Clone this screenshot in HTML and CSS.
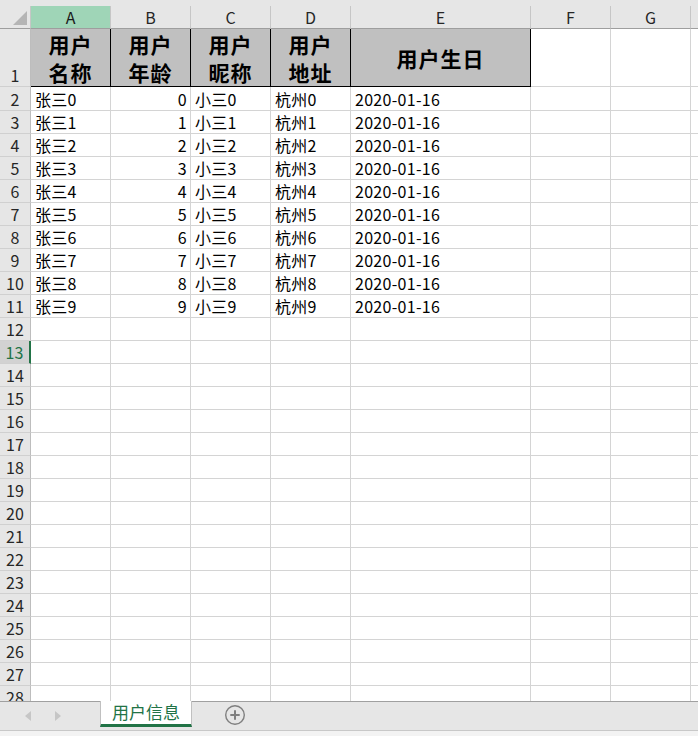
FILE: index.html
```html
<!DOCTYPE html>
<html>
<head>
<meta charset="utf-8">
<link rel="stylesheet" href="styles.css">
</head>
<body>
<div class="app">
  <div class="sheet">
    <div class="topstrip"></div>
    <div class="row colhead">
      <div class="corner"><span class="tri"></span></div>
      <div class="ch sel">A</div><div class="ch">B</div><div class="ch">C</div><div class="ch">D</div><div class="ch">E</div><div class="ch">F</div><div class="ch">G</div><div class="ch"></div>
    </div>
    <div class="row r1">
      <div class="rh">1</div>
      <div class="hd">用户<br>名称</div><div class="hd">用户<br>年龄</div><div class="hd">用户<br>昵称</div><div class="hd">用户<br>地址</div><div class="hd">用户生日</div><div class="c"></div><div class="c"></div><div class="c"></div>
    </div>
    <div class="row r2"><div class="rh">2</div><div class="c">张三0</div><div class="c num">0</div><div class="c">小三0</div><div class="c">杭州0</div><div class="c">2020-01-16</div><div class="c"></div><div class="c"></div><div class="c"></div></div>
    <div class="row"><div class="rh">3</div><div class="c">张三1</div><div class="c num">1</div><div class="c">小三1</div><div class="c">杭州1</div><div class="c">2020-01-16</div><div class="c"></div><div class="c"></div><div class="c"></div></div>
    <div class="row"><div class="rh">4</div><div class="c">张三2</div><div class="c num">2</div><div class="c">小三2</div><div class="c">杭州2</div><div class="c">2020-01-16</div><div class="c"></div><div class="c"></div><div class="c"></div></div>
    <div class="row"><div class="rh">5</div><div class="c">张三3</div><div class="c num">3</div><div class="c">小三3</div><div class="c">杭州3</div><div class="c">2020-01-16</div><div class="c"></div><div class="c"></div><div class="c"></div></div>
    <div class="row"><div class="rh">6</div><div class="c">张三4</div><div class="c num">4</div><div class="c">小三4</div><div class="c">杭州4</div><div class="c">2020-01-16</div><div class="c"></div><div class="c"></div><div class="c"></div></div>
    <div class="row"><div class="rh">7</div><div class="c">张三5</div><div class="c num">5</div><div class="c">小三5</div><div class="c">杭州5</div><div class="c">2020-01-16</div><div class="c"></div><div class="c"></div><div class="c"></div></div>
    <div class="row"><div class="rh">8</div><div class="c">张三6</div><div class="c num">6</div><div class="c">小三6</div><div class="c">杭州6</div><div class="c">2020-01-16</div><div class="c"></div><div class="c"></div><div class="c"></div></div>
    <div class="row"><div class="rh">9</div><div class="c">张三7</div><div class="c num">7</div><div class="c">小三7</div><div class="c">杭州7</div><div class="c">2020-01-16</div><div class="c"></div><div class="c"></div><div class="c"></div></div>
    <div class="row"><div class="rh">10</div><div class="c">张三8</div><div class="c num">8</div><div class="c">小三8</div><div class="c">杭州8</div><div class="c">2020-01-16</div><div class="c"></div><div class="c"></div><div class="c"></div></div>
    <div class="row"><div class="rh">11</div><div class="c">张三9</div><div class="c num">9</div><div class="c">小三9</div><div class="c">杭州9</div><div class="c">2020-01-16</div><div class="c"></div><div class="c"></div><div class="c"></div></div>
    <div class="row"><div class="rh">12</div><div class="c"></div><div class="c"></div><div class="c"></div><div class="c"></div><div class="c"></div><div class="c"></div><div class="c"></div><div class="c"></div></div>
    <div class="row"><div class="rh active">13</div><div class="c"></div><div class="c"></div><div class="c"></div><div class="c"></div><div class="c"></div><div class="c"></div><div class="c"></div><div class="c"></div></div>
    <div class="row"><div class="rh">14</div><div class="c"></div><div class="c"></div><div class="c"></div><div class="c"></div><div class="c"></div><div class="c"></div><div class="c"></div><div class="c"></div></div>
    <div class="row"><div class="rh">15</div><div class="c"></div><div class="c"></div><div class="c"></div><div class="c"></div><div class="c"></div><div class="c"></div><div class="c"></div><div class="c"></div></div>
    <div class="row"><div class="rh">16</div><div class="c"></div><div class="c"></div><div class="c"></div><div class="c"></div><div class="c"></div><div class="c"></div><div class="c"></div><div class="c"></div></div>
    <div class="row"><div class="rh">17</div><div class="c"></div><div class="c"></div><div class="c"></div><div class="c"></div><div class="c"></div><div class="c"></div><div class="c"></div><div class="c"></div></div>
    <div class="row"><div class="rh">18</div><div class="c"></div><div class="c"></div><div class="c"></div><div class="c"></div><div class="c"></div><div class="c"></div><div class="c"></div><div class="c"></div></div>
    <div class="row"><div class="rh">19</div><div class="c"></div><div class="c"></div><div class="c"></div><div class="c"></div><div class="c"></div><div class="c"></div><div class="c"></div><div class="c"></div></div>
    <div class="row"><div class="rh">20</div><div class="c"></div><div class="c"></div><div class="c"></div><div class="c"></div><div class="c"></div><div class="c"></div><div class="c"></div><div class="c"></div></div>
    <div class="row"><div class="rh">21</div><div class="c"></div><div class="c"></div><div class="c"></div><div class="c"></div><div class="c"></div><div class="c"></div><div class="c"></div><div class="c"></div></div>
    <div class="row"><div class="rh">22</div><div class="c"></div><div class="c"></div><div class="c"></div><div class="c"></div><div class="c"></div><div class="c"></div><div class="c"></div><div class="c"></div></div>
    <div class="row"><div class="rh">23</div><div class="c"></div><div class="c"></div><div class="c"></div><div class="c"></div><div class="c"></div><div class="c"></div><div class="c"></div><div class="c"></div></div>
    <div class="row"><div class="rh">24</div><div class="c"></div><div class="c"></div><div class="c"></div><div class="c"></div><div class="c"></div><div class="c"></div><div class="c"></div><div class="c"></div></div>
    <div class="row"><div class="rh">25</div><div class="c"></div><div class="c"></div><div class="c"></div><div class="c"></div><div class="c"></div><div class="c"></div><div class="c"></div><div class="c"></div></div>
    <div class="row"><div class="rh">26</div><div class="c"></div><div class="c"></div><div class="c"></div><div class="c"></div><div class="c"></div><div class="c"></div><div class="c"></div><div class="c"></div></div>
    <div class="row"><div class="rh">27</div><div class="c"></div><div class="c"></div><div class="c"></div><div class="c"></div><div class="c"></div><div class="c"></div><div class="c"></div><div class="c"></div></div>
    <div class="row"><div class="rh">28</div><div class="c"></div><div class="c"></div><div class="c"></div><div class="c"></div><div class="c"></div><div class="c"></div><div class="c"></div><div class="c"></div></div>
  </div>
  <div class="tabbar">
    <div class="nav">
      <span class="arrow left"></span>
      <span class="arrow right"></span>
    </div>
    <div class="tab">用户信息</div>
    <div class="add">
      <svg width="22" height="22" viewBox="0 0 22 22">
        <circle cx="11" cy="11" r="9.3" fill="none" stroke="#7f7f7f" stroke-width="1.4"/>
        <path d="M11 6.3v9.4M6.3 11h9.4" stroke="#7f7f7f" stroke-width="2"/>
      </svg>
    </div>
  </div>
  <div class="statusstrip"></div>
</div>
</body>
</html>
```

FILE: styles.css
```css
* { box-sizing: border-box; }
html, body { margin: 0; padding: 0; }
body {
  width: 698px;
  height: 736px;
  overflow: hidden;
  background: #ffffff;
  font-family: "Noto Sans CJK SC", "Noto Sans", sans-serif;
  color: #000;
}
.app {
  display: flex;
  flex-direction: column;
  height: 736px;
}
.sheet {
  flex: 1;
  overflow: hidden;
  background: #fff;
}
.topstrip {
  height: 6px;
  background: #e6e6e6;
}
.row {
  display: grid;
  grid-template-columns: 31px 80px 80px 80px 80px 180px 80px 80px 80px;
  height: 23px;
}
.row.colhead { height: 23px; }
.row.r1 { height: 58px; }
.row.r2 { height: 24px; }

.corner {
  position: relative;
  background: #e6e6e6;
  border-right: 1px solid #c6c6c6;
  border-bottom: 1px solid #9e9e9e;
}
.tri {
  position: absolute;
  right: 3px;
  bottom: 3px;
  width: 0;
  height: 0;
  border-left: 14px solid transparent;
  border-bottom: 14px solid #b5b5b5;
}
.ch {
  background: #e6e6e6;
  border-right: 1px solid #c6c6c6;
  border-bottom: 1px solid #9e9e9e;
  font-size: 16px;
  line-height: 22px;
  text-align: center;
  color: #262626;
}
.ch.sel { background: #9fd5b7; color: #1a1a1a; }

.rh {
  background: #e6e6e6;
  border-right: 1px solid #bdbdbd;
  border-bottom: 1px solid #d0d0d0;
  font-size: 16px;
  line-height: 21px;
  text-align: center;
  color: #262626;
  display: flex;
  align-items: flex-end;
  justify-content: center;
}
.rh.active {
  background: #d2d2d2;
  color: #217346;
  border-right: 2px solid #217346;
}
.c {
  border-right: 1px solid #d4d4d4;
  border-bottom: 1px solid #d4d4d4;
  font-size: 16px;
  line-height: 22px;
  padding-left: 4px;
  white-space: nowrap;
  overflow: hidden;
  display: flex;
  align-items: flex-end;
  letter-spacing: 0.3px;
}
.c.num {
  justify-content: flex-end;
  padding-left: 0;
  padding-right: 3px;
}
.hd {
  background: #c0c0c0;
  border-right: 1px solid #000;
  border-bottom: 1px solid #000;
  font-weight: bold;
  font-size: 21px;
  line-height: 28px;
  text-align: center;
  display: flex;
  align-items: center;
  justify-content: center;
  letter-spacing: 1px;
  color: #000;
}

.tabbar {
  height: 30px;
  flex: none;
  background: #e6e6e6;
  border-top: 1px solid #a0a0a0;
  border-bottom: 1px solid #c8c8c8;
  display: flex;
  align-items: stretch;
}
.nav {
  width: 100px;
  display: flex;
  align-items: center;
  padding-left: 25px;
  gap: 24px;
}
.arrow {
  width: 0;
  height: 0;
  border-top: 5px solid transparent;
  border-bottom: 5px solid transparent;
}
.arrow.left { border-right: 6px solid #c6c6c6; }
.arrow.right { border-left: 6px solid #c6c6c6; }
.tab {
  width: 92px;
  margin-top: -1px;
  height: 26px;
  background: #fff;
  border-left: 1px solid #c0c0c0;
  border-right: 1px solid #c0c0c0;
  border-bottom: 3px solid #217346;
  color: #217346;
  font-size: 17px;
  line-height: 22px;
  text-align: center;
}
.add {
  margin-left: 32px;
  display: flex;
  align-items: center;
  padding-bottom: 2px;
}
.statusstrip {
  height: 5px;
  flex: none;
  background: #f3f3f3;
}
```
